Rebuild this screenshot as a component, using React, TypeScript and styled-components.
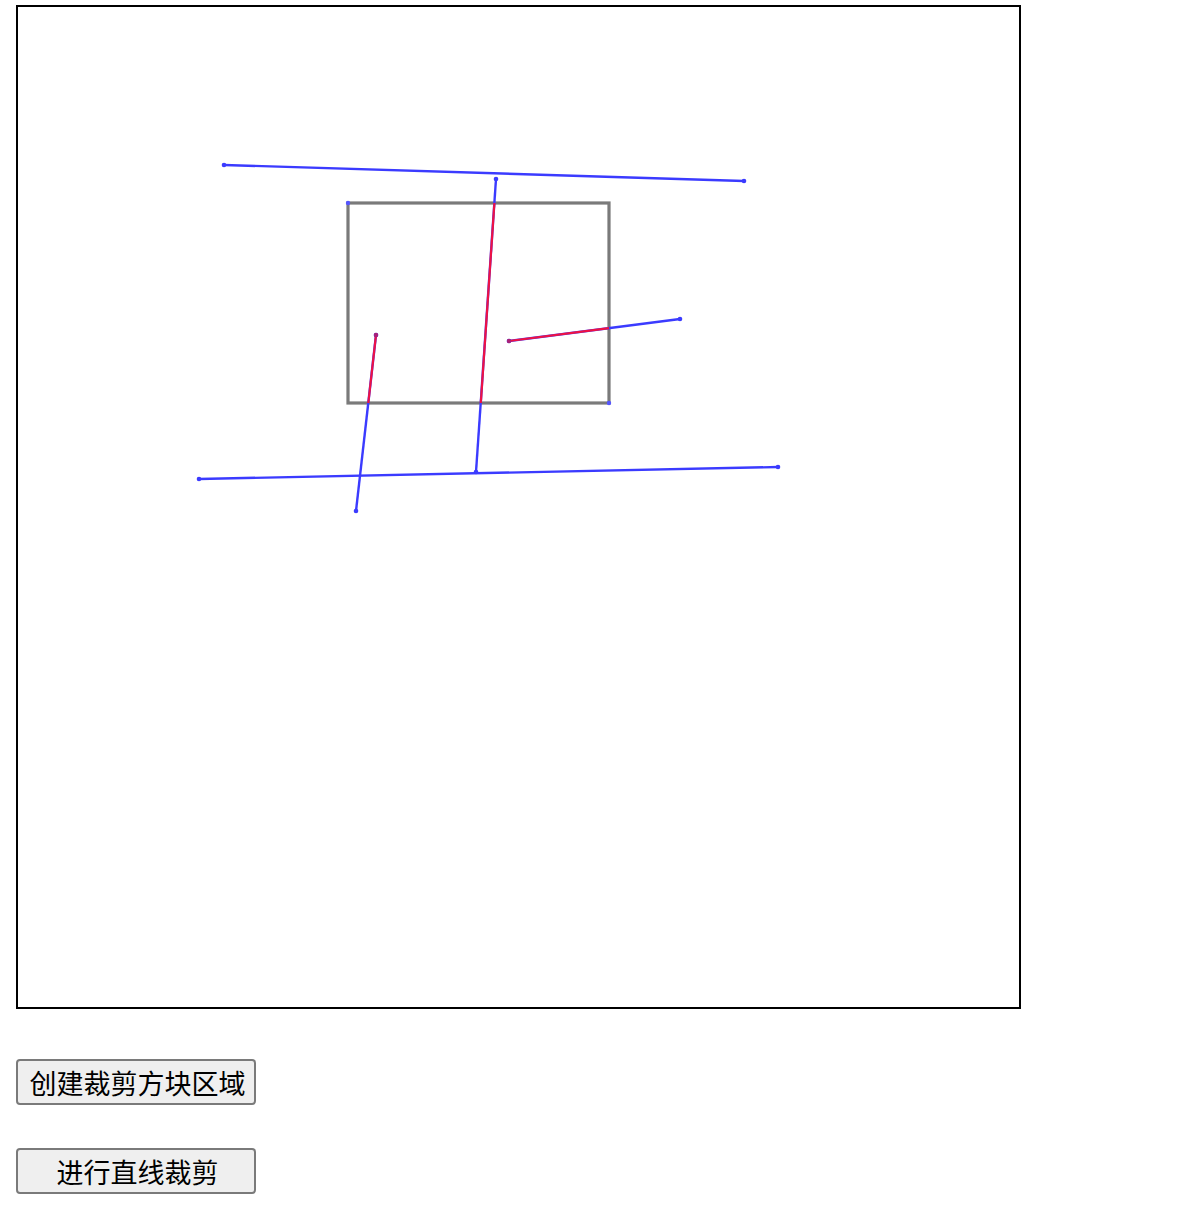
import React from "react";
import styled, { createGlobalStyle } from "styled-components";

const Global = createGlobalStyle`
  html, body { margin: 0; padding: 0; background: #ffffff; }
  body { font-family: "Noto Sans CJK SC", "Noto Sans", sans-serif; }
`;

const Page = styled.div`
  display: flex;
  flex-direction: column;
  align-items: flex-start;
  padding: 5px 0 0 16px;
`;

const CanvasFrame = styled.div`
  width: 1001px;
  height: 1000px;
  border: 2px solid #000;
  background: #fff;
`;

const Controls = styled.div`
  display: flex;
  flex-direction: column;
  gap: 43px;
  margin-top: 50px;
`;

const ActionButton = styled.button`
  width: 240px;
  height: 46px;
  box-sizing: border-box;
  border: 2px solid #7a7a7a;
  border-radius: 4px;
  background: #efefef;
  color: #000;
  font-family: "Noto Sans CJK SC", "Noto Sans", sans-serif;
  font-size: 27px;
  line-height: 1;
  padding: 0 0 0 3px;
  display: flex;
  align-items: center;
  justify-content: center;
  white-space: nowrap;
  cursor: pointer;
`;

type Seg = { x1: number; y1: number; x2: number; y2: number };

const BLUE = "#3b3bff";
const RED = "#ee1144";

const lines: Seg[] = [
  { x1: 224, y1: 165, x2: 744, y2: 181 },
  { x1: 496, y1: 179, x2: 476, y2: 472 },
  { x1: 376, y1: 335, x2: 356, y2: 511 },
  { x1: 509, y1: 341, x2: 680, y2: 319 },
  { x1: 199, y1: 479, x2: 778, y2: 467 },
];

const clipped: Seg[] = [
  { x1: 494.4, y1: 203, x2: 480.8, y2: 403 },
  { x1: 376, y1: 335, x2: 368.3, y2: 403 },
  { x1: 509, y1: 341, x2: 609, y2: 328.1 },
];

export default function App() {
  return (
    <>
      <Global />
      <Page>
        <CanvasFrame>
          <svg width="1001" height="1000" viewBox="18 7 1001 1000">
            <rect x="348" y="203" width="261" height="200" fill="none" stroke="#7a7a7a" strokeWidth="3.2" />
            <circle cx="348" cy="203" r="2.2" fill="#5555ff" />
            <circle cx="609" cy="403" r="2.2" fill="#5555ff" />
            {lines.map((l, i) => (
              <g key={i}>
                <line x1={l.x1} y1={l.y1} x2={l.x2} y2={l.y2} stroke={BLUE} strokeWidth="2.4" />
                <circle cx={l.x1} cy={l.y1} r="2.3" fill={BLUE} />
                <circle cx={l.x2} cy={l.y2} r="2.3" fill={BLUE} />
              </g>
            ))}
            {clipped.map((l, i) => (
              <line key={i} x1={l.x1} y1={l.y1} x2={l.x2} y2={l.y2} stroke={RED} strokeWidth="2.2" />
            ))}
            <circle cx="376" cy="335" r="2.2" fill="#aa2277" />
            <circle cx="509" cy="341" r="2.2" fill="#aa2277" />
          </svg>
        </CanvasFrame>
        <Controls>
          <ActionButton>创建裁剪方块区域</ActionButton>
          <ActionButton>进行直线裁剪</ActionButton>
        </Controls>
      </Page>
    </>
  );
}
